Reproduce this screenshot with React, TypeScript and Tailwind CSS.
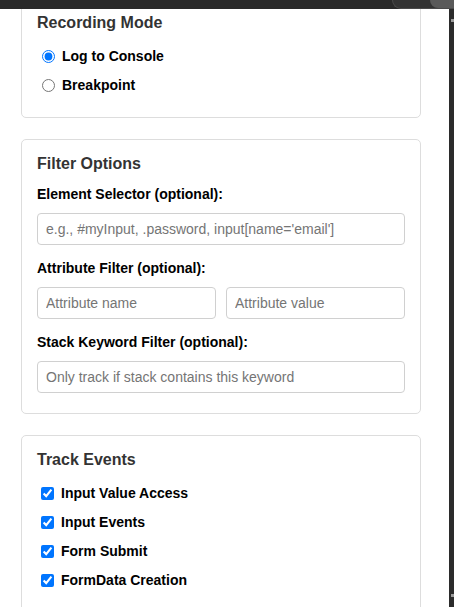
import React from "react";

function Card({
  title,
  children,
  className = "",
  titleGap = "mb-[10px]",
}: {
  title: string;
  children: React.ReactNode;
  className?: string;
  titleGap?: string;
}) {
  return (
    <div className={`w-[400px] rounded-[5px] border border-[#dddddd] bg-white px-[15px] pt-[15px] ${className}`}>
      <h3 className={`${titleGap} text-[16px] font-bold leading-[18px] text-[#333333]`}>{title}</h3>
      {children}
    </div>
  );
}

function FieldLabel({ children }: { children: React.ReactNode }) {
  return <label className="mb-[10px] block text-[14px] font-bold leading-[17px] text-black">{children}</label>;
}

function TextBox({ placeholder }: { placeholder: string }) {
  return (
    <input
      type="text"
      placeholder={placeholder}
      className="h-[32px] w-full rounded-[4px] border border-[#d0d0d0] bg-white px-[8px] text-[14px] text-black outline-none placeholder:text-[#757575]"
    />
  );
}

const events = ["Input Value Access", "Input Events", "Form Submit", "FormData Creation"];

export default function App() {
  return (
    <div className="flex h-screen w-full flex-col overflow-hidden bg-white font-['Liberation_Sans',Arial,sans-serif]">
      {/* window chrome strip */}
      <div className="flex h-[9px] shrink-0 justify-end bg-[#292929]">
        <div className="flex w-[62px] justify-end rounded-bl-[12px] border-b border-l border-[#4a4a4a] bg-[#333333]">
          <div className="w-[24px] rounded-bl-[10px] bg-[#5a5a5a]" />
        </div>
      </div>

      <div className="flex min-h-0 flex-1">
        <div className="min-w-0 flex-1 overflow-hidden">
          <div className="-mt-[11px] flex flex-col gap-[21px] pl-[21px]">
            <Card title="Recording Mode" className="pb-[17px]">
              <label className="flex h-[29px] items-center text-[14px] font-bold leading-[17px] text-black">
                <input type="radio" name="mode" defaultChecked className="m-0 ml-[5px] mr-[7px] h-[13px] w-[13px] accent-[#0075ff]" />
                Log to Console
              </label>
              <label className="flex h-[29px] items-center text-[14px] font-bold leading-[17px] text-black">
                <input type="radio" name="mode" className="m-0 ml-[5px] mr-[7px] h-[13px] w-[13px] accent-[#0075ff]" />
                Breakpoint
              </label>
            </Card>

            <Card title="Filter Options" className="pb-[20px]" titleGap="mb-[13px]">
              <div className="flex flex-col gap-[15px]">
                <div>
                  <FieldLabel>Element Selector (optional):</FieldLabel>
                  <TextBox placeholder="e.g., #myInput, .password, input[name='email']" />
                </div>
                <div>
                  <FieldLabel>Attribute Filter (optional):</FieldLabel>
                  <div className="flex gap-[10px]">
                    <TextBox placeholder="Attribute name" />
                    <TextBox placeholder="Attribute value" />
                  </div>
                </div>
                <div>
                  <FieldLabel>Stack Keyword Filter (optional):</FieldLabel>
                  <TextBox placeholder="Only track if stack contains this keyword" />
                </div>
              </div>
            </Card>

            <Card title="Track Events" className="pb-[18px]">
              {events.map((ev) => (
                <label key={ev} className="flex h-[29px] items-center text-[14px] font-bold leading-[17px] text-black">
                  <input type="checkbox" defaultChecked className="m-0 ml-[4px] mr-[7px] h-[13px] w-[13px] accent-[#0075ff]" />
                  {ev}
                </label>
              ))}
            </Card>
          </div>
        </div>

        {/* scrollbar */}
        <div className="flex w-[5px] shrink-0 flex-col justify-between bg-[#2b2b2b] py-[10px]">
          <div className="ml-[2px] h-[3px] w-[3px] bg-[#9a9a9a]" />
          <div className="ml-[2px] h-[3px] w-[3px] bg-[#9a9a9a]" />
        </div>
      </div>
    </div>
  );
}
